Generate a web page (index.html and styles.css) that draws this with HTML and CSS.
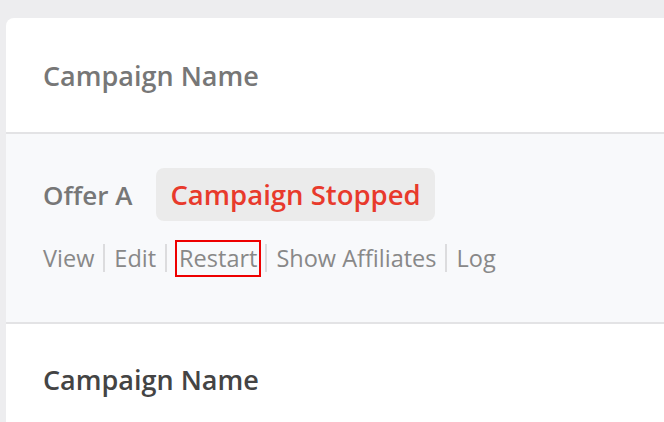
FILE: index.html
```html
<!DOCTYPE html>
<html>
<head>
<meta charset="utf-8">
<link rel="stylesheet" href="styles.css">
</head>
<body>
<div class="card">
  <div class="row head">
    <div class="title muted">Campaign Name</div>
  </div>
  <div class="row offer">
    <div class="offer-line">
      <span class="offer-name">Offer A</span>
      <span class="badge">Campaign Stopped</span>
    </div>
    <div class="links">
      <span class="link">View</span>
      <span class="link">Edit</span>
      <span class="link"><span class="boxed">Restart</span></span>
      <span class="link">Show Affiliates</span>
      <span class="link">Log</span>
    </div>
  </div>
  <div class="row head last">
    <div class="title dark">Campaign Name</div>
  </div>
</div>
</body>
</html>
```
FILE: styles.css
```css
html, body {
  margin: 0;
  padding: 0;
  background: #ededef;
  height: 100%;
  overflow: hidden;
}
body {
  font-family: "Open Sans", "Noto Sans", sans-serif;
  padding: 18px 0 0 6px;
  box-sizing: border-box;
}
.card {
  background: #fff;
  border-radius: 8px 0 0 0;
  overflow: hidden;
}
.row {
  padding-left: 37px;
}
.head {
  height: 114px;
  display: flex;
  align-items: center;
  border-bottom: 2px solid #e3e3e5;
}
.head.last {
  height: 110px;
}
.title {
  font-size: 27px;
  font-weight: 600;
}
.muted { color: #777; }
.dark { color: #444; }
.offer {
  background: #f8f9fb;
  height: 190px;
  border-bottom: 2px solid #e3e3e5;
  padding-top: 34px;
  box-sizing: border-box;
}
.offer-line {
  display: flex;
  align-items: center;
  gap: 24px;
}
.offer-name {
  font-size: 26px;
  font-weight: 600;
  color: #777;
}
.badge {
  background: #ebebeb;
  border-radius: 8px;
  height: 53px;
  padding: 0 14px;
  display: flex;
  align-items: center;
  color: #e83a2c;
  font-size: 27.5px;
  font-weight: 600;
}
.links {
  display: flex;
  align-items: center;
  margin-top: 23px;
  font-size: 23.5px;
  color: #888;
}
.link {
  padding: 0 9px;
  border-left: 2px solid #dcdcde;
  line-height: 28px;
}
.link:first-child {
  padding-left: 0;
  border-left: none;
}
.link:nth-child(3) {
  padding: 0 4px 0 8px;
}
.boxed {
  display: inline-block;
  border: 2px solid #e00;
  padding: 3px 2px;
  line-height: 27px;
  margin: -5px 0;
}
```
